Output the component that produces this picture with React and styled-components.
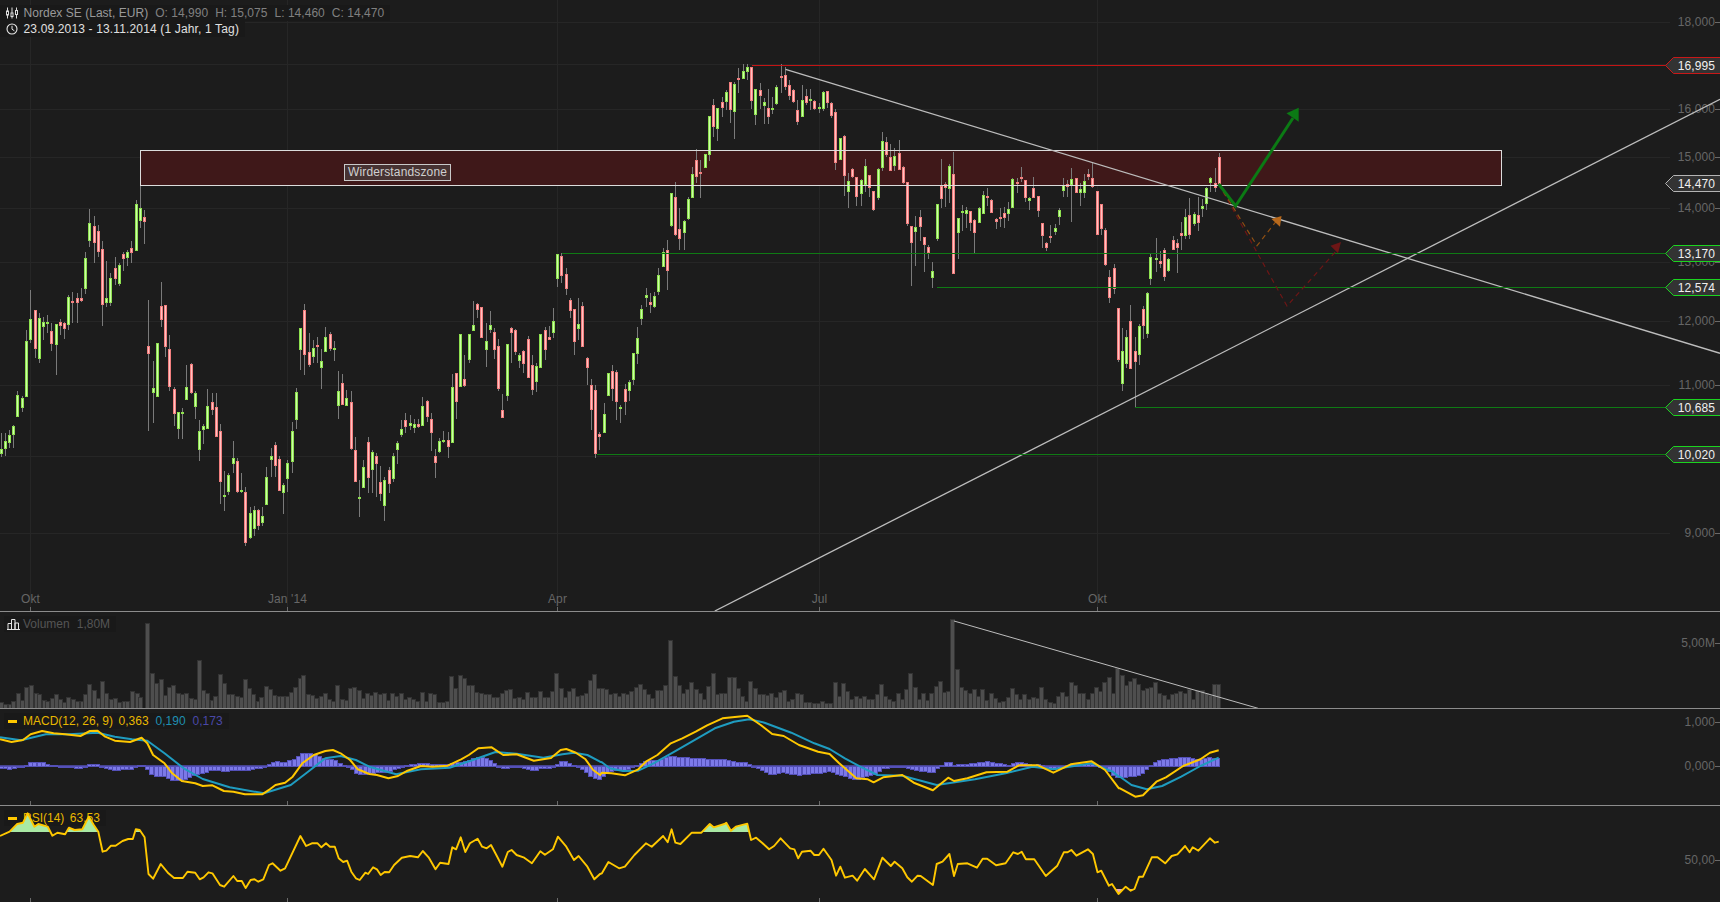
import React from "react";
import styled, { createGlobalStyle } from "styled-components";

const Z = 2.6133;
const G = {
  z4: [(z) => z / Z, (v) => 280 + v / 3],
  z2: [(z) => 600 + z / Z, (v) => 40 + v / 3],
  z3: [(z) => 1120 + z / Z, (v) => v / 3],
  z9: [(z) => 590 + z / 3, (v) => 270 + v / 3],
  z12: [(z) => 1100 + z / 3, (v) => 280 + v / 3],
};

const RAW = {
  z4: [[3,1,508,521,460,530],[14,1,484,506,460,527],[25,1,466,488,450,505],[35,1,438,465,435,503],[47,1,346,410,333,410],[58,1,355,383,348,395],[69,1,184,352,150,352],[80,1,118,179,30,190],[93,0,91,206,91,235],[103,1,115,238,100,248],[114,1,127,140,110,180],[124,1,126,130,105,160],[135,0,154,191,130,212],[147,1,132,194,132,284],[158,0,125,137,118,165],[168,0,130,148,125,177],[179,1,52,136,45,150],[190,0,64,68,37,130],[202,0,55,68,40,128],[213,0,55,62,25,65],[223,1,-65,26,-85,42],[233,1,-170,-118,-213,-100],[246,0,-162,-112,-192,-50],[257,0,-147,-85,-165,-70],[267,0,-92,75,-117,137],[278,1,55,68,-57,80],[289,1,-5,68,-20,78],[301,0,-35,-4,-68,15],[312,1,-44,12,-50,18],[323,0,-77,-64,-85,-27],[333,1,-85,-67,-90,-43],[344,0,-95,-82,-116,-52],[357,1,-227,-88,-240,-88],[367,1,-215,-178,-284,-157],[378,0,-188,-175,-210,-109],[388,0,198,221,60,452],[401,1,325,338,243,428],[411,1,190,352,190,352],[422,0,78,119,6,140],[432,0,76,200,76,230],[443,0,208,320,165,332],[456,0,328,401,320,438],[466,1,397,446,397,476],[477,1,396,401,383,476],[487,1,322,359,255,359],[500,0,252,338,250,343],[511,1,340,380,332,416],[521,1,454,509,420,542],[532,1,439,449,433,492],[542,1,379,446,327,446],[555,0,367,389,340,404],[566,0,382,472,338,472],[576,0,454,607,432,672],[587,1,645,648,573,692],[597,1,586,636,578,645],[610,1,535,551,484,578],[621,0,544,635,535,638],[631,1,629,635,579,640],[641,0,637,788,622,797],[655,1,700,773,682,778],[665,1,691,748,677,767],[675,0,690,737,688,750],[686,1,709,728,680,738],[697,1,592,674,560,674],[710,1,529,540,505,590],[719,0,496,557,485,590],[730,0,538,632,528,632],[741,1,616,640,610,702],[751,1,550,597,540,636],[764,1,454,545,427,578],[775,1,337,419,324,446],[785,1,145,209,145,270],[796,0,91,224,72,285],[809,0,217,255,160,260],[819,1,205,230,180,250],[829,0,196,201,170,248],[840,1,244,263,207,326],[851,1,172,215,141,215],[864,0,162,206,155,212],[874,1,205,209,183,243],[885,1,334,377,273,416],[895,0,310,376,283,376],[905,1,354,377,330,377],[918,0,367,507,333,510],[929,0,511,607,472,607],[940,1,652,656,600,710],[950,1,562,623,540,625],[963,0,487,593,472,638],[973,1,517,569,510,638],[984,0,528,551,520,650],[994,0,607,641,558,662],[1005,1,601,677,590,722],[1018,0,571,611,561,640],[1028,1,529,597,520,605],[1039,1,490,509,484,552],[1049,1,446,465,420,470],[1060,0,421,440,398,460],[1073,1,428,437,405,450],[1083,1,433,443,418,458],[1094,0,433,440,418,445],[1104,1,379,437,352,437],[1117,0,364,410,360,425],[1128,0,418,460,400,513],[1138,0,529,548,507,594],[1148,1,484,516,475,518],[1159,1,481,485,453,490],[1172,0,481,500,455,533],[1182,1,322,488,283,488],[1193,0,280,365,280,417],[1203,1,163,320,163,322],[1214,0,297,317,225,320],[1227,1,163,239,163,250],[1237,1,136,152,63,153],[1248,0,73,89,68,114],[1258,0,82,173,82,175],[1271,1,184,209,130,260],[1282,1,136,149,93,160],[1292,0,156,209,145,236],[1303,0,199,327,178,332],[1313,0,391,413,342,413],[1326,1,193,347,193,362],[1337,0,145,158,140,250],[1347,0,151,215,148,225],[1358,1,226,243,220,265],[1368,0,213,252,210,280],[1381,0,178,293,168,295],[1391,0,256,329,225,344],[1402,1,259,305,250,336],[1412,1,163,263,163,265],[1425,0,151,209,140,240],[1436,0,172,179,138,180],[1446,1,124,158,85,173],[1457,1,-77,-2,-78,22],[1468,0,-72,-13,-80,8],[1480,0,-17,26,-35,44],[1491,0,60,93,55,113],[1501,0,87,185,87,224],[1512,1,133,147,55,180],[1522,0,79,200,65,200],[1535,0,235,263,232,315]],
  z9: [[4,0,346,419,327,480],[16,0,361,553,345,563],[28,0,492,500,487,540],[43,1,433,488,400,488],[55,1,310,377,310,378],[67,0,304,356,285,393],[79,0,307,395,300,450],[91,1,411,413,405,458],[106,0,358,395,342,435],[118,1,337,362,330,393],[130,1,250,329,250,345],[142,1,205,251,170,282]],
  z2: [[109,1,808,838,795,855],[121,1,766,773,744,800],[132,0,786,794,760,820],[143,1,769,800,755,803],[153,1,706,755,685,765],[166,1,637,680,625,680],[176,0,631,692,600,750],[187,1,460,557,460,562],[197,0,472,584,427,587],[208,0,568,596,504,630],[221,1,544,578,540,630],[231,1,478,536,470,540],[241,1,403,473,380,473],[252,0,361,410,327,430],[263,0,397,401,360,473],[276,1,343,383,343,383],[286,1,229,344,229,362],[297,0,196,260,178,290],[307,1,205,266,205,302],[320,0,187,203,170,230],[331,1,156,185,150,210],[341,0,127,209,127,248],[351,1,133,215,127,298],[362,0,114,116,85,160],[375,1,94,116,72,118],[385,1,82,95,72,120],[396,0,82,182,82,208],[406,1,148,224,148,254],[419,0,151,167,130,208],[430,1,187,197,175,253],[440,0,205,230,148,252],[451,1,205,206,170,222],[461,1,142,191,135,196],[474,0,109,110,72,160],[485,0,106,140,82,150],[495,0,136,167,120,180],[506,0,151,185,148,188],[516,0,211,245,180,254],[529,1,181,230,136,232],[540,0,169,188,148,196],[550,1,178,182,148,210],[560,0,184,206,180,210],[573,1,202,203,188,220],[584,1,157,208,153,212],[594,0,154,188,154,205],[605,0,190,227,187,235],[615,0,217,368,206,390],[628,1,295,360,295,360],[639,0,289,407,285,467],[649,1,424,455,400,503],[660,0,388,410,385,415],[670,0,412,470,412,497],[683,1,421,461,418,497],[694,1,379,436,358,455],[704,0,406,443,405,470],[715,0,454,510,452,513],[728,1,388,473,385,480],[738,1,304,383,277,392],[748,0,307,344,290,350],[759,0,352,392,313,392],[770,1,349,377,323,392],[783,0,340,389,300,389],[793,0,382,430,378,433],[804,0,427,552,425,558],[814,0,559,608,559,738],[824,1,562,575,529,678],[837,0,532,560,510,602],[848,0,592,614,592,696],[858,0,622,640,615,657],[869,1,694,713,667,744],[882,1,492,596,492,604],[892,0,437,476,358,505],[903,0,433,443,425,500],[913,1,379,446,372,490],[924,0,403,701,337,701],[937,1,535,578,535,657],[947,1,514,515,495,572],[958,1,511,521,502,565],[968,0,514,548,514,572],[979,0,541,578,538,638],[992,1,505,548,502,550],[1002,1,466,521,452,521],[1013,0,468,470,445,498],[1023,0,481,518,478,520],[1035,0,538,545,535,566],[1047,0,532,537,505,560],[1058,0,520,533,502,565],[1067,1,508,521,487,543],[1078,1,418,503,415,503],[1091,0,427,432,415,460],[1101,0,411,413,380,425],[1112,0,421,473,421,487],[1122,1,475,482,470,510],[1133,0,445,473,410,475],[1146,0,469,512,469,530],[1156,0,550,587,550,625],[1167,0,610,625,605,632],[1177,0,589,593,555,610],[1190,1,565,575,552,585],[1201,1,511,530,505,555],[1211,1,436,452,415,470],[1221,0,433,440,420,472],[1232,1,418,435,385,545],[1245,0,415,458,415,460],[1255,1,448,458,430,497],[1266,1,424,458,402,473],[1276,0,403,410,388,420],[1287,0,415,440,370,443],[1300,0,454,584,454,584],[1310,0,493,566,493,585],[1320,0,571,674,565,678],[1331,0,712,773,690,788],[1344,0,685,746,672,762]],
  z12: [[55,0,85,240,85,245],[67,1,214,312,145,332],[79,1,172,251,150,264],[91,0,124,266,75,266],[106,0,214,245,170,381],[118,1,139,224,132,254],[130,0,88,137,78,176],[142,1,40,161,37,173]],
  z3: [[81,1,772,838,762,855],[95,1,775,781,714,815],[105,0,783,791,752,803],[116,0,750,830,745,843],[127,1,777,813,775,815],[139,0,721,749,708,750],[150,0,730,743,717,818],[160,0,700,707,665,750],[171,1,652,707,628,717],[181,0,646,705,595,717],[194,1,643,672,635,677],[205,0,645,670,590,692],[215,1,619,626,597,650],[226,1,565,611,560,630],[237,1,535,548,530,575],[249,0,548,563,505,575],[260,0,472,552,460,552]],
};

const CANDLES = Object.entries(RAW).flatMap(([k, list]) => {
  const [fx, fy] = G[k];
  return list.map(([x, up, bt, bb, wt, wb]) => ({
    x: Math.floor(fx(x)), up: !!up,
    bt: Math.round(fy(bt)), bb: Math.round(fy(bb)), wt: Math.round(fy(wt)), wb: Math.round(fy(wb)),
  }));
});

const V6 = [[3,305],[14,312],[25,312],[35,303],[47,280],[58,300],[69,262],[80,256],[93,280],[103,283],[114,300],[124,302],[135,294],[147,282],[158,298],[168,306],[179,292],[190,298],[202,304],[213,304],[223,283],[233,252],[246,270],[257,295],[267,244],[278,278],[289,297],[301,295],[312,305],[323,304],[333,303],[344,274],[357,278],[367,292],[385,70],[397,220],[408,250],[420,238],[430,286],[441,262],[453,256],[465,279],[475,282],[486,280],[498,295],[509,297],[520,181],[530,270],[541,280],[553,300],[563,287],[574,223],[585,250],[596,282],[607,283],[619,288],[629,290],[639,238],[651,265],[662,283],[673,304],[683,292],[694,259],[706,268],[717,285],[728,288],[738,289],[750,287],[761,275],[772,262],[783,235],[793,226],[805,283],[816,285],[827,294],[838,288],[849,280],[860,298],[871,302],[881,256],[893,297],[904,300],[915,265],[926,262],[937,270],[948,295],[959,278],[970,285],[981,275],[992,282],[1003,278],[1014,300],[1025,278],[1036,288],[1047,280],[1058,296],[1069,290],[1080,296],[1091,304],[1102,277],[1113,304],[1124,280],[1135,282],[1146,305],[1157,306],[1168,303],[1179,229],[1190,265],[1201,226],[1212,235],[1223,256],[1234,256],[1245,277],[1256,278],[1267,283],[1278,283],[1289,290],[1300,290],[1311,278],[1322,270],[1333,268],[1344,295],[1355,292],[1366,297],[1377,277],[1388,290],[1399,290],[1410,274],[1421,290],[1432,291],[1443,274],[1454,220],[1465,265],[1476,292],[1487,272],[1498,265],[1509,287],[1520,286],[1531,278],[1542,240],[1553,223],[1564,265]];
const V7 = [[5,265],[16,268],[27,283],[38,280],[49,288],[60,278],[71,283],[82,274],[93,262],[104,253],[115,267],[126,283],[137,295],[148,271],[159,271],[170,256],[184,121],[195,229],[206,256],[217,280],[228,268],[239,247],[250,268],[261,280],[272,296],[283,259],[294,220],[305,283],[316,280],[327,280],[338,232],[349,232],[360,265],[371,287],[382,303],[393,244],[404,265],[415,283],[426,283],[437,285],[448,280],[459,292],[470,275],[481,271],[492,302],[503,298],[514,278],[525,283],[536,307],[547,307],[558,310],[569,310],[580,304],[591,310],[602,310],[613,247],[624,288],[635,250],[646,274],[657,297],[668,289],[679,294],[690,287],[701,296],[712,296],[723,283],[734,253],[745,289],[756,298],[767,302],[778,280],[789,296],[800,268],[811,220],[822,262],[833,298],[844,280],[855,300],[866,279],[877,259],[888,244],[899,277],[910,274],[921,58],[933,208],[944,262],[955,270],[966,278],[977,268],[988,287],[999,266],[1010,300],[1021,280],[1032,293],[1043,307],[1054,304],[1065,292],[1076,265],[1087,283],[1098,296],[1109,282],[1120,298],[1131,292],[1142,294],[1153,262],[1164,298],[1175,306],[1186,310],[1197,287],[1208,275],[1219,289],[1230,247],[1241,256],[1252,280],[1263,278],[1274,298],[1285,280],[1296,262],[1307,272],[1318,247],[1329,232],[1340,280],[1351,205]];
const V8 = [[5,225],[15,256],[25,244],[37,235],[48,253],[59,271],[70,265],[81,262],[92,247],[103,280],[114,286],[125,297],[136,283],[147,280],[158,274],[169,280],[180,268],[191,297],[202,271],[213,271],[224,280],[235,286],[246,253],[257,253]];
const vy = (v) => 600 + v / 3;
const VOLUME = [
  ...V6.map(([x, v]) => ({ x: x / Z, y: vy(v) })),
  ...V7.map(([x, v]) => ({ x: 600 + x / Z, y: vy(v) })),
  ...V8.map(([x, v]) => ({ x: 1120 + x / Z, y: vy(v) })),
];

const conv = (a, x0, lim = Infinity) => a.filter(([x]) => x <= lim).map(([x, v]) => [x0 + x / Z, 600 + v / 3]);
const series = (a, b, c) => [...conv(a, 0), ...conv(b, 600, 1356), ...conv(c, 1120)];

const MACD = series(
  [[0,418],[30,426],[60,420],[80,403],[110,393],[140,400],[170,403],[210,408],[235,393],[255,392],[275,410],[300,422],[340,426],[370,413],[385,430],[400,465],[430,490],[450,520],[475,543],[510,550],[530,558],[555,556],[585,573],[610,575],[640,583],[685,583],[705,568],[720,555],[745,548],[765,530],[790,490],[820,465],[850,453],[870,450],[890,460],[915,480],[935,508],[965,522],[985,525],[1015,535],[1040,528],[1065,512],[1100,498],[1130,500],[1170,497],[1205,478],[1225,465],[1250,445],[1285,442],[1315,465],[1350,463],[1395,482],[1440,474],[1465,450],[1480,447],[1505,458],[1530,478],[1550,510],[1568,525]],
  [[5,518],[30,520],[65,526],[100,508],[120,485],[150,465],[185,430],[215,415],[250,395],[280,376],[320,355],[385,347],[420,375],[450,402],[480,408],[520,435],[570,455],[600,462],[625,490],[670,535],[700,538],[715,547],[740,532],[790,525],[820,548],[870,571],[910,533],[925,543],[960,535],[1010,517],[1065,515],[1095,496],[1145,496],[1185,518],[1230,493],[1285,484],[1320,510],[1356,565]],
  [[0,565],[40,590],[60,586],[95,545],[120,532],[165,498],[210,478],[235,458],[258,451]]
);
const SIGNAL = series(
  [[0,412],[55,421],[120,403],[180,403],[255,398],[300,410],[345,418],[385,422],[430,460],[480,505],[530,537],[600,562],[690,580],[760,555],[800,520],[850,475],[890,468],[930,480],[965,500],[1035,523],[1100,508],[1175,503],[1230,482],[1295,456],[1350,461],[1420,473],[1470,463],[1500,458],[1535,465],[1568,485]],
  [[5,487],[25,505],[60,513],[100,512],[140,490],[190,458],[240,425],[300,385],[350,365],[390,358],[430,368],[500,398],[560,430],[600,447],[640,475],[680,500],[725,525],[790,527],[880,555],[980,538],[1060,520],[1130,500],[1185,508],[1285,490],[1340,515],[1356,530]],
  [[0,530],[30,555],[70,568],[110,558],[160,530],[210,498],[258,473]]
);
const RSI = series(
  [[0,708],[25,695],[45,672],[60,668],[72,640],[90,680],[100,672],[125,680],[137,707],[150,698],[170,703],[180,683],[195,690],[215,688],[232,650],[245,675],[257,695],[268,755],[278,752],[290,737],[302,737],[320,723],[335,717],[347,717],[355,688],[365,690],[378,712],[388,822],[400,836],[420,792],[440,820],[455,834],[478,834],[490,815],[510,818],[522,838],[532,832],[545,817],[555,820],[575,855],[586,860],[610,828],[620,843],[632,843],[642,864],[655,840],[665,838],[675,845],[688,838],[703,795],[712,790],[733,812],[745,805],[785,708],[800,738],[815,730],[830,730],[840,742],[852,730],[862,740],[875,740],[885,775],[897,786],[907,782],[918,815],[930,835],[940,840],[955,818],[962,822],[975,802],[985,808],[995,825],[1005,816],[1017,817],[1030,795],[1050,773],[1072,768],[1092,772],[1105,753],[1120,772],[1138,808],[1150,788],[1172,792],[1182,742],[1192,748],[1204,712],[1216,756],[1228,730],[1248,716],[1260,740],[1272,745],[1283,735],[1300,772],[1313,800],[1327,756],[1337,750],[1350,765],[1368,772],[1390,790],[1412,754],[1424,764],[1445,748],[1458,710],[1480,740],[1500,780],[1512,768],[1535,800],[1553,838],[1568,822]],
  [[5,820],[22,786],[50,805],[65,800],[90,765],[120,730],[135,740],[165,708],[177,727],[187,688],[197,728],[210,732],[240,698],[265,698],[287,672],[297,682],[325,672],[330,668],[342,692],[355,680],[385,671],[395,720],[408,713],[425,730],[442,748],[455,738],[472,715],[497,745],[508,748],[518,775],[528,755],[550,752],[560,765],[572,765],[584,746],[605,780],[617,827],[628,800],[640,833],[660,827],[672,842],[692,807],[716,838],[738,773],[760,798],[770,785],[790,805],[803,832],[815,845],[830,827],[838,828],[870,855],[880,792],[895,785],[913,762],[925,828],[935,792],[960,790],[985,803],[1000,776],[1012,776],[1035,796],[1060,790],[1080,757],[1092,762],[1102,755],[1113,778],[1135,778],[1165,828],[1195,797],[1212,757],[1222,757],[1232,750],[1245,767],[1275,748],[1288,762],[1300,817],[1310,812],[1330,857],[1338,852],[1355,882]],
  [[15,860],[28,872],[38,867],[50,830],[60,830],[83,772],[98,772],[118,790],[135,768],[150,763],[170,738],[182,757],[190,742],[205,752],[235,715],[248,728],[258,725]]
);

const pts = (a) => a.map(([x, y]) => `${x.toFixed(1)},${y.toFixed(1)}`).join(" ");
const at = (a, x) => {
  for (let i = 1; i < a.length; i++) {
    if (x <= a[i][0]) {
      const [x0, y0] = a[i - 1];
      const [x1, y1] = a[i];
      return y0 + ((y1 - y0) * (x - x0)) / (x1 - x0 || 1);
    }
  }
  return a[a.length - 1][1];
};
const ZERO = 766;
const HIST = Array.from({ length: 292 }, (_, i) => {
  const x = 1 + i * 4.18;
  return { x, y: at(MACD, x) - at(SIGNAL, x) };
});

const MONTHS = [
  { x: 30, label: "Okt" },
  { x: 287, label: "Jan '14" },
  { x: 557, label: "Apr" },
  { x: 819, label: "Jul" },
  { x: 1097, label: "Okt" },
];
const GRID_Y = [22, 64, 109, 157, 208, 262, 321, 385, 456, 533];
const PRICE_AXIS = [
  { y: 21.7, t: "18,000" },
  { y: 108.7, t: "16,000" },
  { y: 156.7, t: "15,000" },
  { y: 207.7, t: "14,000" },
  { y: 261.5, t: "13,000" },
  { y: 321, t: "12,000" },
  { y: 384.7, t: "11,000" },
  { y: 532.7, t: "9,000" },
];
const LEVELS = [
  { y: 65, x: 752, t: "16,995", c: "red" },
  { y: 253, x: 562, t: "13,170", c: "green" },
  { y: 287, x: 937, t: "12,574", c: "green" },
  { y: 407, x: 1135, t: "10,685", c: "green" },
  { y: 454, x: 597, t: "10,020", c: "green" },
];
const TAG = { red: "#c91818", green: "#1bd41f", gray: "#b4b4b4" };

const Global = createGlobalStyle`
  html, body { margin: 0; padding: 0; background: #1c1c1c; overflow: hidden; }
  #root { width: 1720px; height: 902px; }
`;
const Page = styled.div`
  display: flex;
  flex-direction: column;
  width: 1720px;
  height: 902px;
  background: #1c1c1c;
  font: 12px "Liberation Sans", Arial, sans-serif;
`;
const Panel = styled.section`
  position: relative;
  flex: none;
  height: ${(p) => p.$h}px;
  box-sizing: border-box;
  border-bottom: ${(p) => (p.$last ? "none" : "1px solid #8c8c8c")};
  overflow: hidden;
`;
const Plot = styled.svg`
  position: absolute;
  inset: 0;
  display: block;
  width: 1720px;
  height: ${(p) => p.$h}px;
`;
const GridLine = styled.line`
  stroke: #262626;
  stroke-width: 1;
  shape-rendering: crispEdges;
`;
const Tick = styled.line`
  stroke: #6a6a6a;
  stroke-width: 1;
  shape-rendering: crispEdges;
`;
const AxisText = styled.text`
  font: 12px "Liberation Sans", Arial, sans-serif;
  fill: #666;
  text-anchor: ${(p) => p.$anchor || "end"};
  dominant-baseline: central;
  letter-spacing: 0.1px;
`;
const TagText = styled(AxisText)`
  fill: #f0f0f0;
`;
const Wick = styled.rect`
  fill: #7a7a7a;
  shape-rendering: crispEdges;
`;
const Body = styled.rect`
  fill: ${(p) => (p.$up ? "#ccffa8" : "#ffc2c2")};
  stroke: ${(p) => (p.$up ? "#8ee04f" : "#f27f7f")};
  stroke-width: 1;
  shape-rendering: crispEdges;
`;
const ZoneFill = styled.rect`
  fill: #3f1819;
`;
const ZoneEdge = styled.rect`
  fill: none;
  stroke: #dcdcdc;
  stroke-width: 1;
  shape-rendering: crispEdges;
`;
const Trend = styled.line`
  stroke: #bdbdbd;
  stroke-width: ${(p) => p.$w || 1.3};
`;
const Level = styled.line`
  stroke: ${(p) => (p.$c === "red" ? "#c41414" : "#0f7a14")};
  stroke-width: 1;
  shape-rendering: crispEdges;
`;
const LevelTag = styled.path`
  fill: #333;
  stroke: ${(p) => TAG[p.$c]};
  stroke-width: 1;
`;
const Route = styled.polyline`
  fill: none;
  stroke: ${(p) => p.$c};
  stroke-width: ${(p) => p.$w};
  stroke-dasharray: ${(p) => p.$dash || "none"};
`;
const Head = styled.polygon`
  fill: ${(p) => p.$c};
`;
const VolBar = styled.rect`
  fill: #4e4e4e;
  stroke: #333;
  stroke-width: 1;
  shape-rendering: crispEdges;
`;
const HistBar = styled.rect`
  fill: #7c79e8;
  stroke: #5450b8;
  stroke-width: 1;
  shape-rendering: crispEdges;
`;
const ZeroLine = styled.line`
  stroke: #5450b8;
  stroke-width: 1.5;
`;
const Curve = styled.polyline`
  fill: none;
  stroke: ${(p) => p.$c};
  stroke-width: ${(p) => p.$w || 2};
  stroke-linejoin: round;
`;
const Band = styled.polygon`
  fill: ${(p) => p.$c};
  stroke: none;
`;
const HeaderBlock = styled.div`
  position: absolute;
  left: 0;
  top: 5px;
  display: flex;
  flex-direction: column;
  align-items: flex-start;
`;
const Chip = styled.div`
  display: flex;
  align-items: center;
  height: 16px;
  padding: 0 6px;
  background: #191919;
  color: ${(p) => p.$c || "#999"};
  white-space: nowrap;
  letter-spacing: ${(p) => p.$track ?? 0.03}px;
`;
const IndicatorChip = styled(Chip)`
  position: absolute;
  left: 4px;
  top: 4px;
  padding: 0 6px 0 3px;
  letter-spacing: 0;
`;
const Glyph = styled.svg`
  flex: none;
  width: 12px;
  height: 12px;
  margin-right: 5.5px;
`;
const VolumeGlyph = styled.svg`
  flex: none;
  width: 13px;
  height: 12px;
  margin-right: 3px;
`;
const Dash = styled.i`
  flex: none;
  display: block;
  width: 9px;
  height: 3px;
  margin: 0 6px 0 1px;
  background: #ffc800;
`;
const Quote = styled.span`
  margin-left: 7px;
  color: #808080;
`;
const IndicatorName = styled.span`
  margin-right: -1.5px;
`;
const Val = styled.span`
  margin-left: 7px;
  color: ${(p) => p.$c};
`;
const ZoneLabel = styled.div`
  position: absolute;
  left: 344px;
  top: 164px;
  box-sizing: border-box;
  width: 107px;
  height: 17px;
  border: 1px solid #c9c9c9;
  background: #473333;
  color: #d0d0d0;
  text-align: center;
  line-height: 15px;
  letter-spacing: 0.15px;
  white-space: nowrap;
`;

const Months = ({ y1, y2, labelY }) =>
  MONTHS.map((m) => (
    <React.Fragment key={m.x}>
      <Tick x1={m.x + 0.5} x2={m.x + 0.5} y1={y1} y2={y2} />
      {labelY && (
        <AxisText x={m.x + 0.5} y={labelY} $anchor="middle">
          {m.label}
        </AxisText>
      )}
    </React.Fragment>
  ));

const AxisMark = ({ y, t }) => (
  <>
    <AxisText x={1715} y={y}>{t}</AxisText>
    <Tick x1={1715} x2={1720} y1={Math.round(y) + 0.5} y2={Math.round(y) + 0.5} />
  </>
);

const PriceTag = ({ y, t, c }) => (
  <>
    <LevelTag $c={c} d={`M1721,${y - 7.5} H1673.5 L1665.5,${y + 0.5} L1673.5,${y + 8.5} H1721`} />
    <TagText x={1715} y={y + 0.5}>{t}</TagText>
  </>
);

const MainChart = () => (
  <Plot $h={611} viewBox="0 0 1720 611">
    {MONTHS.map((m) => (
      <GridLine key={m.x} x1={m.x + 0.5} x2={m.x + 0.5} y1={0} y2={611} />
    ))}
    {GRID_Y.map((y) => (
      <GridLine key={y} x1={0} x2={1670} y1={y + 0.5} y2={y + 0.5} />
    ))}
    {PRICE_AXIS.map((a) => (
      <AxisMark key={a.t} y={a.y} t={a.t} />
    ))}
    <Months y1={607} y2={611} labelY={599} />
    <ZoneFill x={140} y={150} width={1361} height={35} />
    {CANDLES.map((c, i) => (
      <React.Fragment key={i}>
        <Wick x={c.x} y={c.wt} width={1} height={Math.max(c.wb - c.wt, 1)} />
        <Body $up={c.up} x={c.x - 0.5} y={c.bt + 0.5} width={2} height={Math.max(c.bb - c.bt - 1, 1)} />
      </React.Fragment>
    ))}
    <ZoneEdge x={140.5} y={150.5} width={1361} height={35} />
    <Trend x1={785.6} y1={69.3} x2={1720} y2={353.3} />
    <Trend x1={714.8} y1={611} x2={1720} y2={99.3} />
    {LEVELS.map((l) => (
      <Level key={l.t} $c={l.c} x1={l.x} x2={1666} y1={l.y + 0.5} y2={l.y + 0.5} />
    ))}
    <Route $c="#6e1616" $w={1.2} $dash="5 4" points="1218.7,184 1287,306 1338,249" />
    <Head $c="#6e1616" points="1341,242 1330.5,245.7 1338,253.3" />
    <Route $c="#8f4f12" $w={1.2} $dash="5 4" points="1218.7,184 1257,245.7 1278,219" />
    <Head $c="#b8691c" points="1281.5,216 1271.5,219 1280,226.7" />
    <Route $c="#0b7a14" $w={3} points="1218.7,184 1235.6,206 1293,118" />
    <Head $c="#0b7a14" points="1298.7,107.7 1286.5,113.3 1298.7,121.7" />
    <PriceTag y={65} t="16,995" c="red" />
    <PriceTag y={183} t="14,470" c="gray" />
    <PriceTag y={253} t="13,170" c="green" />
    <PriceTag y={287} t="12,574" c="green" />
    <PriceTag y={407} t="10,685" c="green" />
    <PriceTag y={454} t="10,020" c="green" />
  </Plot>
);

const VolumeChart = () => (
  <Plot $h={96} viewBox="0 612 1720 96">
    <Months y1={704} y2={708} />
    {VOLUME.map((b, i) => (
      <VolBar key={i} x={Math.round(b.x) - 1.5} y={Math.round(b.y) + 0.5} width={4} height={Math.max(708 - Math.round(b.y), 1)} />
    ))}
    <Trend $w={1} x1={954} y1={621} x2={1258} y2={708.3} />
    <AxisMark y={642.7} t="5,00M" />
  </Plot>
);

const MacdChart = () => (
  <Plot $h={96} viewBox="0 709 1720 96">
    <Months y1={801} y2={805} />
    <ZeroLine x1={0} x2={1219} y1={ZERO} y2={ZERO} />
    {HIST.map((h, i) => (
      <HistBar
        key={i}
        x={Math.round(h.x) - 1.5}
        y={(h.y < 0 ? Math.round(ZERO + h.y) : ZERO) + 0.5}
        width={4}
        height={Math.max(Math.round(Math.abs(h.y)), 1)}
      />
    ))}
    <Curve $c="#1f9cc0" points={pts(SIGNAL)} />
    <Curve $c="#ffc800" points={pts(MACD)} />
    <AxisMark y={721.7} t="1,000" />
    <AxisMark y={765.7} t="0,000" />
  </Plot>
);

const RsiChart = () => (
  <Plot $h={96} viewBox="0 806 1720 96">
    <defs>
      <clipPath id="over">
        <rect x={0} y={806} width={1720} height={26} />
      </clipPath>
      <clipPath id="under">
        <rect x={0} y={889} width={1720} height={14} />
      </clipPath>
    </defs>
    <Months y1={898} y2={902} />
    <g clipPath="url(#over)">
      <Band $c="#a9e9a4" points={`${pts(RSI)} 1219,832 0,832`} />
    </g>
    <g clipPath="url(#under)">
      <Band $c="#e7a3b8" points={`${pts(RSI)} 1219,889 0,889`} />
    </g>
    <Curve $c="#ffc800" $w={1.9} points={pts(RSI)} />
    <AxisMark y={860} t="50,00" />
  </Plot>
);

const OhlcIcon = () => (
  <Glyph viewBox="0 0 12 12">
    <path d="M1.5 0.5V11.5M6 0.5V11.5M10.5 0.5V11.5" stroke="#dcdcdc" strokeWidth="1" fill="none" />
    <rect x="0.5" y="4" width="2" height="4" fill="#1c1c1c" stroke="#dcdcdc" />
    <rect x="5" y="6" width="2" height="3.5" fill="#1c1c1c" stroke="#dcdcdc" />
    <rect x="9.5" y="3.5" width="2" height="4" fill="#1c1c1c" stroke="#dcdcdc" />
  </Glyph>
);
const ClockIcon = () => (
  <Glyph viewBox="0 0 12 12">
    <circle cx="6" cy="6" r="5" fill="none" stroke="#e8e8e8" strokeWidth="1.1" />
    <path d="M6 2.8V6.2L8.4 7.8" fill="none" stroke="#e8e8e8" strokeWidth="1" />
  </Glyph>
);
const BarsIcon = () => (
  <VolumeGlyph viewBox="0 0 13 12">
    <path d="M1 11.5V5.5H4.5V11.5M4.5 11.5V1.5H8V11.5M8 11.5V5H11.5V11.5M0 11.5H13" fill="none" stroke="#e4e4e4" strokeWidth="1" />
  </VolumeGlyph>
);

export default function App() {
  return (
    <Page>
      <Global />
      <Panel $h={612}>
        <MainChart />
        <HeaderBlock>
          <Chip>
            <OhlcIcon />
            Nordex SE (Last, EUR)
            <Quote>O: 14,990</Quote>
            <Quote>H: 15,075</Quote>
            <Quote>L: 14,460</Quote>
            <Quote>C: 14,470</Quote>
          </Chip>
          <Chip $c="#e0e0e0" $track={0.15}>
            <ClockIcon />
            23.09.2013 - 13.11.2014 (1 Jahr, 1 Tag)
          </Chip>
        </HeaderBlock>
        <ZoneLabel>Wirderstandszone</ZoneLabel>
      </Panel>
      <Panel $h={97}>
        <IndicatorChip $c="#555">
          <BarsIcon />
          <span>Volumen</span>
          <Val $c="#555">1,80M</Val>
        </IndicatorChip>
        <VolumeChart />
      </Panel>
      <Panel $h={97}>
        <IndicatorChip $c="#e8b800">
          <Dash />
          <IndicatorName>MACD(12, 26, 9)</IndicatorName>
          <Val $c="#e8b800">0,363</Val>
          <Val $c="#1f8fb2">0,190</Val>
          <Val $c="#4a48a8">0,173</Val>
        </IndicatorChip>
        <MacdChart />
      </Panel>
      <Panel $h={96} $last>
        <IndicatorChip $c="#e8b800">
          <Dash />
          <IndicatorName>RSI(14)</IndicatorName>
          <Val $c="#e8b800">63,53</Val>
        </IndicatorChip>
        <RsiChart />
      </Panel>
    </Page>
  );
}
